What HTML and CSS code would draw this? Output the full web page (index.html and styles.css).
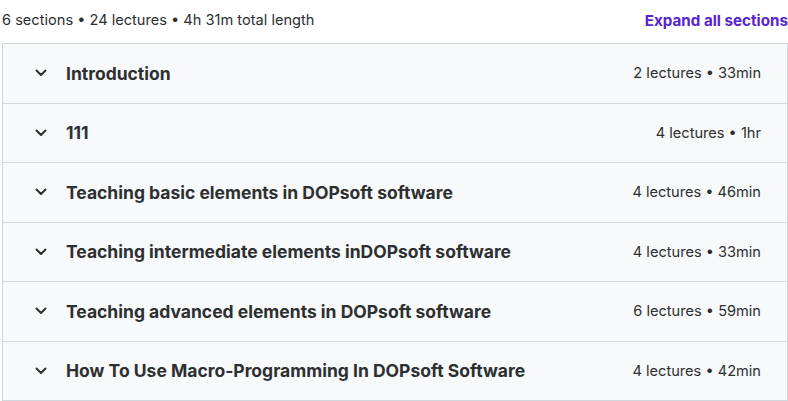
FILE: index.html
```html
<!DOCTYPE html>
<html lang="en">
<head>
    <meta charset="utf-8">
    <title>Course content</title>
    <link rel="stylesheet" href="styles.css">
</head>
<body>
    <div class="curriculum">
        <div class="curriculum-header">
            <span class="summary">6 sections • 24 lectures • 4h 31m total length</span>
            <button class="expand-all">Expand all sections</button>
        </div>
        <div class="sections">
            <div class="section">
                <svg class="chevron" viewBox="0 0 12 8"><path d="M1.5 1.5L6 6l4.5-4.5"/></svg>
                <span class="title">Introduction</span>
                <span class="meta">2 lectures • 33min</span>
            </div>
            <div class="section">
                <svg class="chevron" viewBox="0 0 12 8"><path d="M1.5 1.5L6 6l4.5-4.5"/></svg>
                <span class="title">111</span>
                <span class="meta">4 lectures • 1hr</span>
            </div>
            <div class="section">
                <svg class="chevron" viewBox="0 0 12 8"><path d="M1.5 1.5L6 6l4.5-4.5"/></svg>
                <span class="title">Teaching basic elements in DOPsoft software</span>
                <span class="meta">4 lectures • 46min</span>
            </div>
            <div class="section">
                <svg class="chevron" viewBox="0 0 12 8"><path d="M1.5 1.5L6 6l4.5-4.5"/></svg>
                <span class="title">Teaching intermediate elements inDOPsoft software</span>
                <span class="meta">4 lectures • 33min</span>
            </div>
            <div class="section">
                <svg class="chevron" viewBox="0 0 12 8"><path d="M1.5 1.5L6 6l4.5-4.5"/></svg>
                <span class="title">Teaching advanced elements in DOPsoft software</span>
                <span class="meta">6 lectures • 59min</span>
            </div>
            <div class="section">
                <svg class="chevron" viewBox="0 0 12 8"><path d="M1.5 1.5L6 6l4.5-4.5"/></svg>
                <span class="title">How To Use Macro-Programming In DOPsoft Software</span>
                <span class="meta">4 lectures • 42min</span>
            </div>
        </div>
    </div>
</body>
</html>
```

FILE: styles.css
```css
body {
    margin: 0;
    background: #fff;
    color: #2d2f31;
    font-family: Inter, "Noto Sans", sans-serif;
    overflow: hidden;
}
.curriculum {
    width: 786px;
    margin-left: 2px;
}
.curriculum-header {
    display: flex;
    align-items: center;
    justify-content: space-between;
    height: 40px;
    padding-bottom: 3px;
}
.summary {
    font-size: 14.6px;
    color: #2d2f31;
}
.expand-all {
    border: none;
    background: none;
    padding: 0;
    font-family: inherit;
    font-size: 15.2px;
    font-weight: 700;
    color: #5624d0;
    cursor: pointer;
}
.sections {
    border: 1px solid #d1d7dc;
    border-bottom: none;
}
.section {
    display: flex;
    align-items: center;
    height: 58.5px;
    padding: 0 26px 0 32px;
    background: #f7f9fa;
    border-bottom: 1px solid #d1d7dc;
}
.chevron {
    width: 12px;
    height: 8px;
    flex: none;
    fill: none;
    stroke: #2d2f31;
    stroke-width: 2;
    stroke-linecap: round;
    stroke-linejoin: round;
}
.title {
    margin-left: 19px;
    flex: 1;
    font-size: 17.5px;
    font-weight: 700;
}
.meta {
    font-size: 14.6px;
}
```
